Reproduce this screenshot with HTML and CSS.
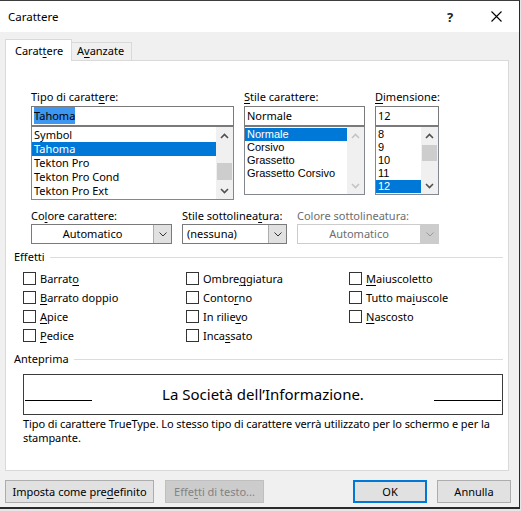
FILE: index.html
```html
<!DOCTYPE html>
<html lang="it">
<head>
<meta charset="utf-8">
<title>Carattere</title>
<link rel="stylesheet" href="styles.css">
</head>
<body>
<div class="window">
  <div class="titlebar">
    <span class="title">Carattere</span>
    <span class="cap-btn help">?</span>
    <span class="cap-btn close">
      <svg width="11" height="11" viewBox="0 0 11 11"><path d="M0.5 0.5 L10.5 10.5 M10.5 0.5 L0.5 10.5" stroke="#000" stroke-width="1.1" fill="none"/></svg>
    </span>
  </div>

  <div class="tabs">
    <div class="tab active">Carat<u>t</u>ere</div>
    <div class="tab">A<u>v</u>anzate</div>
  </div>

  <div class="panel">
    <div class="font-row">
      <div class="fcol col-font">
        <div class="label">Tipo di caratt<u>e</u>re:</div>
        <div class="input"><span class="sel-text">Tahoma</span></div>
        <div class="listbox lb-font">
          <ul class="items rows14">
            <li>Symbol</li>
            <li class="selected">Tahoma</li>
            <li>Tekton Pro</li>
            <li>Tekton Pro Cond</li>
            <li>Tekton Pro Ext</li>
          </ul>
          <div class="scrollbar">
            <div class="arrow"><svg width="9" height="6" viewBox="0 0 9 6"><path d="M1 5 L4.5 1.5 L8 5" stroke="#505050" stroke-width="1.6" fill="none"/></svg></div>
            <div class="track"><div class="thumb thumb-font"></div></div>
            <div class="arrow"><svg width="9" height="6" viewBox="0 0 9 6"><path d="M1 1 L4.5 4.5 L8 1" stroke="#505050" stroke-width="1.6" fill="none"/></svg></div>
          </div>
        </div>
      </div>

      <div class="fcol col-style">
        <div class="label"><u>S</u>tile carattere:</div>
        <div class="input">Normale</div>
        <div class="listbox lb-small">
          <ul class="items rows13">
            <li class="selected">Normale</li>
            <li>Corsivo</li>
            <li>Grassetto</li>
            <li>Grassetto Corsivo</li>
          </ul>
          <div class="scrollbar">
            <div class="arrow"><svg width="9" height="6" viewBox="0 0 9 6"><path d="M1 5 L4.5 1.5 L8 5" stroke="#c4c4c4" stroke-width="1.6" fill="none"/></svg></div>
            <div class="track"></div>
            <div class="arrow"><svg width="9" height="6" viewBox="0 0 9 6"><path d="M1 1 L4.5 4.5 L8 1" stroke="#c4c4c4" stroke-width="1.6" fill="none"/></svg></div>
          </div>
        </div>
      </div>

      <div class="fcol col-size">
        <div class="label"><u>D</u>imensione:</div>
        <div class="input">12</div>
        <div class="listbox lb-small">
          <ul class="items rows13">
            <li>8</li>
            <li>9</li>
            <li>10</li>
            <li>11</li>
            <li class="selected">12</li>
          </ul>
          <div class="scrollbar">
            <div class="arrow"><svg width="9" height="6" viewBox="0 0 9 6"><path d="M1 5 L4.5 1.5 L8 5" stroke="#505050" stroke-width="1.6" fill="none"/></svg></div>
            <div class="track"><div class="thumb thumb-size"></div></div>
            <div class="arrow"><svg width="9" height="6" viewBox="0 0 9 6"><path d="M1 1 L4.5 4.5 L8 1" stroke="#505050" stroke-width="1.6" fill="none"/></svg></div>
          </div>
        </div>
      </div>
    </div>

    <div class="combo-row">
      <div class="ccol cc-color">
        <div class="label">Co<u>l</u>ore carattere:</div>
        <div class="combo">
          <span class="combo-text centered">Automatico</span>
          <span class="combo-btn"><svg width="8" height="5" viewBox="0 0 8 5"><path d="M0.5 0.5 L4 4 L7.5 0.5" stroke="#333" stroke-width="1" fill="none"/></svg></span>
        </div>
      </div>
      <div class="ccol cc-under">
        <div class="label">Stile sottolinea<u>t</u>ura:</div>
        <div class="combo">
          <span class="combo-text">(nessuna)</span>
          <span class="combo-btn"><svg width="8" height="5" viewBox="0 0 8 5"><path d="M0.5 0.5 L4 4 L7.5 0.5" stroke="#333" stroke-width="1" fill="none"/></svg></span>
        </div>
      </div>
      <div class="ccol cc-ucolor">
        <div class="label disabled">Colore sottolineatura:</div>
        <div class="combo combo-disabled">
          <span class="combo-text centered">Automatico</span>
          <span class="combo-btn"><svg width="8" height="5" viewBox="0 0 8 5"><path d="M0.5 0.5 L4 4 L7.5 0.5" stroke="#9a9a9a" stroke-width="1" fill="none"/></svg></span>
        </div>
      </div>
    </div>

    <div class="group-head gh-effects"><span>Effetti</span><span class="gh-line"></span></div>

    <div class="checks">
      <label class="chk"><span class="box"></span><span>Barrat<u>o</u></span></label>
      <label class="chk"><span class="box"></span><span>Ombre<u>g</u>giatura</span></label>
      <label class="chk"><span class="box"></span><span><u>M</u>aiuscoletto</span></label>
      <label class="chk"><span class="box"></span><span><u>B</u>arrato doppio</span></label>
      <label class="chk"><span class="box"></span><span>Conto<u>r</u>no</span></label>
      <label class="chk"><span class="box"></span><span>Tutto ma<u>i</u>uscole</span></label>
      <label class="chk"><span class="box"></span><span><u>A</u>pice</span></label>
      <label class="chk"><span class="box"></span><span>In rilie<u>v</u>o</span></label>
      <label class="chk"><span class="box"></span><span><u>N</u>ascosto</span></label>
      <label class="chk"><span class="box"></span><span><u>P</u>edice</span></label>
      <label class="chk"><span class="box"></span><span>Inca<u>s</u>sato</span></label>
    </div>

    <div class="group-head gh-preview"><span>Anteprima</span><span class="gh-line"></span></div>

    <div class="preview">
      <span class="pv-line pv-left"></span>
      <span class="pv-text">La Società dell’Informazione.</span>
      <span class="pv-line pv-right"></span>
    </div>

    <div class="desc">Tipo di carattere TrueType. Lo stesso tipo di carattere verrà utilizzato per lo schermo e per la<br>stampante.</div>
  </div>

  <div class="buttons">
    <button class="btn b-default">Imposta come pre<u>d</u>efinito</button>
    <button class="btn b-effects" disabled>Effe<u>t</u>ti di testo...</button>
    <button class="btn b-ok">OK</button>
    <button class="btn b-cancel">Annulla</button>
  </div>
</div>
</body>
</html>
```

FILE: styles.css
```css
* { box-sizing: border-box; }

html, body {
  margin: 0;
  padding: 0;
}

body {
  background: #e6e6e6;
  font-family: "Noto Sans", "Open Sans", sans-serif;
  font-size: 11px;
  color: #000;
  width: 521px;
  height: 511px;
  overflow: hidden;
}

u { text-decoration-thickness: 1px; text-underline-offset: 2px; }

.window {
  width: 520px;
  height: 509px;
  background: #f0f0f0;
  border-top: 1px solid #3c3c3c;
  border-right: 1px solid #2a2a2a;
  border-bottom: 2px solid #2a2a2a;
  display: flex;
  flex-direction: column;
}

/* Title bar */
.titlebar {
  height: 31px;
  background: #fff;
  display: flex;
  align-items: center;
  padding-left: 8px;
  flex: none;
}
.title { font-size: 11.5px; }
.cap-btn {
  width: 46px;
  height: 31px;
  display: flex;
  align-items: center;
  justify-content: center;
}
.help {
  margin-left: auto;
  font-size: 13px;
  font-weight: 700;
  color: #222;
}

/* Tabs */
.tabs {
  margin-top: 7px;
  height: 21px;
  padding-left: 5px;
  display: flex;
  align-items: flex-end;
  flex: none;
}
.tab {
  height: 18px;
  width: 60px;
  background: #f0f0f0;
  border: 1px solid #d9d9d9;
  border-bottom: none;
  border-left: none;
  padding-left: 5px;
  line-height: 16px;
}
.tab.active {
  height: 22px;
  width: 67px;
  margin-bottom: -1px;
  background: #fff;
  border-left: 1px solid #d9d9d9;
  padding-left: 9px;
  line-height: 21px;
  position: relative;
  z-index: 1;
}

/* Panel */
.panel {
  margin-left: 5px;
  width: 504px;
  height: 411px;
  background: #fff;
  border: 1px solid #d9d9d9;
  padding: 29px 5px 0 8px;
  flex: none;
}

.label {
  height: 14px;
  line-height: 14px;
  white-space: nowrap;
}
.label.disabled { color: #6d6d6d; }

.font-row {
  display: flex;
  align-items: flex-start;
  gap: 10px;
  padding-left: 17px;
}
.col-font { width: 203px; }
.col-style { width: 121px; }
.col-size { width: 64px; }

.input {
  margin-top: 2px;
  height: 20px;
  border: 1px solid #7a7a7a;
  padding-left: 2px;
  line-height: 18px;
  background: #fff;
  white-space: nowrap;
}
.sel-text {
  background: #3d96ef;
  color: #000;
  padding: 1px 0 1px 0;
}

.listbox {
  border: 1px solid #828790;
  border-top-color: #7a7a7a;
  display: flex;
  background: #fff;
}
.lb-font { height: 74px; }
.lb-small { height: 69px; }

.items {
  list-style: none;
  margin: 0;
  padding: 1px 0 0 0;
  flex: 1;
  min-width: 0;
}
.items li {
  padding-left: 2px;
  white-space: nowrap;
  overflow: hidden;
}
.rows14 li { height: 14px; line-height: 14px; }
.rows13 li {
  height: 13px;
  line-height: 13px;
  font-family: "Liberation Sans", Arial, sans-serif;
  font-size: 11px;
}
.items li.selected {
  background: #0078d7;
  color: #fff;
}

.scrollbar {
  width: 17px;
  background: #f0f0f0;
  display: flex;
  flex-direction: column;
  flex: none;
}
.arrow {
  height: 17px;
  display: flex;
  align-items: center;
  justify-content: center;
  flex: none;
}
.track { flex: 1; }
.thumb {
  margin: 0 1px;
  background: #cdcdcd;
}
.thumb-font { margin-top: 19px; height: 17px; }
.thumb-size { margin-top: 1px; height: 16px; }

/* Combo row */
.combo-row {
  display: flex;
  gap: 10px;
  padding-left: 17px;
  margin-top: 9px;
}
.cc-color { width: 141px; }
.cc-under { width: 105px; }
.cc-ucolor { width: 142px; }

.combo {
  margin-top: 1px;
  height: 20px;
  border: 1px solid #7a7a7a;
  display: flex;
  background: #fff;
}
.combo-text {
  flex: 1;
  line-height: 18px;
  padding-left: 4px;
  white-space: nowrap;
}
.combo-text.centered {
  text-align: center;
  padding-left: 0;
}
.combo-btn {
  width: 18px;
  background: #e1e1e1;
  border-left: 1px solid #adadad;
  display: flex;
  align-items: center;
  justify-content: center;
}
.combo-disabled {
  border-color: #cccccc;
  color: #6d6d6d;
}
.combo-disabled .combo-btn {
  background: #cccccc;
  border-left-color: #cccccc;
}

/* Group headers */
.group-head {
  display: flex;
  align-items: center;
  height: 14px;
  line-height: 14px;
}
.gh-line {
  flex: 1;
  height: 1px;
  background: #dcdcdc;
  margin-left: 5px;
}
.gh-effects { margin-top: 6px; }
.gh-preview { margin-top: 7px; }

/* Checkboxes */
.checks {
  margin-top: 5px;
  padding-left: 9px;
  display: grid;
  grid-template-columns: 163px 163px auto;
  grid-auto-rows: 19px;
}
.chk {
  display: flex;
  align-items: center;
  gap: 4px;
  white-space: nowrap;
}
.box {
  width: 13px;
  height: 13px;
  border: 1px solid #333;
  background: #fff;
  flex: none;
}

/* Preview */
.preview {
  margin-top: 8px;
  margin-left: 9px;
  width: 480px;
  height: 41px;
  border: 1px solid #3c3c3c;
  display: flex;
  align-items: flex-start;
}
.pv-line {
  width: 67px;
  height: 1px;
  background: #000;
  margin-top: 25px;
  flex: none;
}
.pv-left { margin-left: 1px; }
.pv-right { margin-right: 1px; }
.pv-text {
  flex: 1;
  text-align: center;
  font-size: 15px;
  line-height: 39px;
  white-space: nowrap;
}

.desc {
  margin-top: 2px;
  padding-left: 9px;
  line-height: 14px;
  white-space: nowrap;
  letter-spacing: -0.08px;
}

/* Buttons */
.buttons {
  display: flex;
  margin-top: 9px;
  padding-left: 5px;
}
.btn {
  font-family: inherit;
  font-size: 11px;
  color: #000;
  height: 23px;
  background: #e1e1e1;
  border: 1px solid #adadad;
  padding: 0;
  margin: 0;
  line-height: 21px;
}
.b-default { width: 149px; }
.b-effects {
  width: 99px;
  margin-left: 11px;
  background: #cccccc;
  border-color: #bfbfbf;
  color: #838383;
}
.b-ok {
  width: 74px;
  margin-left: auto;
  border: 2px solid #0078d7;
  line-height: 19px;
}
.b-cancel {
  width: 74px;
  margin-left: 10px;
  margin-right: 8px;
}
```
